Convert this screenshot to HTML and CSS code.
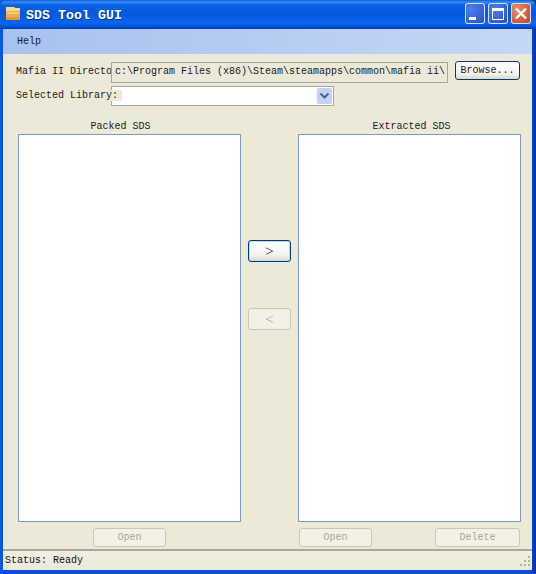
FILE: index.html
```html
<!DOCTYPE html>
<html lang="en">
<head>
<meta charset="utf-8">
<title>SDS Tool GUI</title>
<link rel="stylesheet" href="styles.css">
</head>
<body>
<div class="window">
  <header class="titlebar">
    <svg class="app-icon" width="16" height="16" viewBox="0 0 16 16" aria-hidden="true">
      <path d="M1 2h8l1 1h5v11a1 1 0 0 1-1 1H2a1 1 0 0 1-1-1z" fill="#f0b048"/>
      <path d="M1 2h8l1 1h5v3H1z" fill="#f8dc90"/>
      <path d="M2 7h12v2H2z" fill="#f6cf72"/>
      <path d="M1 12h14v2a1 1 0 0 1-1 1H2a1 1 0 0 1-1-1z" fill="#e09a3c"/>
    </svg>
    <span class="title-text">SDS Tool GUI</span>
    <div class="caption-buttons">
      <div class="cap cap-blue">
        <svg width="20" height="21" viewBox="0 0 20 21" aria-hidden="true"><rect x="4" y="14" width="7" height="3" fill="#fff"/></svg>
      </div>
      <div class="cap cap-blue">
        <svg width="20" height="21" viewBox="0 0 20 21" aria-hidden="true"><path d="M4.5 5.5h11v11h-11z" fill="none" stroke="#fff" stroke-width="1"/><rect x="4" y="5" width="12" height="3" fill="#fff"/></svg>
      </div>
      <div class="cap cap-red">
        <svg width="20" height="21" viewBox="0 0 20 21" aria-hidden="true"><path d="M5 5.5l10 10M15 5.5l-10 10" stroke="#fff" stroke-width="2.4" fill="none"/></svg>
      </div>
    </div>
  </header>
  <div class="body">
    <nav class="menubar"><span class="menu-item">Help</span></nav>
    <main class="content">
      <div class="row row-dir">
        <label class="field-label">Mafia II Directo</label>
        <div class="path-box">c:\Program Files (x86)\Steam\steamapps\common\mafia ii\</div>
        <button class="btn browse" type="button">Browse...</button>
      </div>
      <div class="row row-lib">
        <label class="field-label"><span class="over">Selected Library:</span></label>
        <div class="combo">
          <span class="combo-arrow">
            <svg width="11" height="8" viewBox="0 0 11 8" aria-hidden="true"><path d="M1.5 1.5l4 4 4-4" fill="none" stroke="#4d6185" stroke-width="2"/></svg>
          </span>
        </div>
      </div>
      <div class="panes">
        <div class="pane-head pane-head-left">Packed SDS</div>
        <div></div>
        <div class="pane-head pane-head-right">Extracted SDS</div>
        <div class="listbox"></div>
        <div class="transfer">
          <button class="btn move active" type="button">&gt;</button>
          <button class="btn move" type="button" disabled>&lt;</button>
        </div>
        <div class="listbox"></div>
        <div class="actions actions-left">
          <button class="btn action" type="button" disabled>Open</button>
        </div>
        <div></div>
        <div class="actions actions-right">
          <button class="btn action" type="button" disabled>Open</button>
          <button class="btn action delete" type="button" disabled>Delete</button>
        </div>
      </div>
    </main>
    <footer class="statusbar">
      <span>Status: Ready</span>
      <svg class="grip" width="12" height="12" viewBox="0 0 12 12" aria-hidden="true">
        <g fill="#b5b19f"><rect x="9" y="1" width="2" height="2"/><rect x="5" y="5" width="2" height="2"/><rect x="9" y="5" width="2" height="2"/><rect x="1" y="9" width="2" height="2"/><rect x="5" y="9" width="2" height="2"/><rect x="9" y="9" width="2" height="2"/></g>
      </svg>
    </footer>
  </div>
</div>
</body>
</html>
```
FILE: styles.css
```css
* { box-sizing: border-box; }
html, body { margin: 0; padding: 0; }
body {
  width: 536px;
  height: 574px;
  overflow: hidden;
  font-family: "Liberation Mono", "DejaVu Sans Mono", monospace;
  font-size: 10px;
  color: #1a1a1a;
  background: #0a3fc4;
}
.window {
  width: 536px;
  height: 574px;
  display: flex;
  flex-direction: column;
  background: linear-gradient(90deg, #0a5be8 0, #0a4fd8 4px, #0a4fd8 530px, #0a2fa8 536px);
}
.titlebar {
  height: 29px;
  flex: none;
  display: flex;
  align-items: center;
  padding: 0 5px 0 5px;
  border-radius: 7px 7px 0 0;
  background: linear-gradient(180deg, #0a5ae0 0, #3a8cf5 2px, #0a62e8 5px, #0358dc 14px, #0a66f0 23px, #0450d0 27px, #0238a8 29px);
}
.app-icon { flex: none; margin-right: 5px; margin-top: -3px; }
.title-text {
  flex: 1;
  margin-top: 1px;
  font-size: 13.33px;
  font-weight: bold;
  color: #fff;
  text-shadow: 1px 1px 0 #0a2f90;
}
.caption-buttons { display: flex; gap: 3px; margin-top: -2px; }
.cap {
  width: 20px;
  height: 21px;
  border: 0;
  border-radius: 3px;
  box-shadow: inset 0 0 0 1px #d4e0f7;
  display: flex;
}
.cap-blue { background: radial-gradient(circle at 30% 30%, #4c7fe8 0, #3a63d6 55%, #2a48b8 100%); }
.cap-red { background: radial-gradient(circle at 30% 30%, #e8906c 0, #d8603c 55%, #b8402a 100%); }
.body {
  flex: 1;
  min-height: 0;
  margin: 0 4px 4px 3px;
  display: flex;
  flex-direction: column;
  background: #ece9d8;
}
.menubar {
  height: 25px;
  flex: none;
  display: flex;
  align-items: center;
  padding-left: 14px;
  background: linear-gradient(90deg, #a8c2ee 0, #c4d7f6 100%);
}
.menu-item { line-height: 12px; margin-top: 1px; }
.content {
  flex: 1;
  min-height: 0;
  padding: 8px 0 0 15px;
}
.row { display: flex; align-items: flex-start; margin-left: -2px; }
.row-dir { height: 24px; }
.row-lib { height: 23px; }
.field-label {
  width: 95px;
  flex: none;
  white-space: nowrap;
  line-height: 12px;
  padding-top: 4px;
}
.over { position: relative; background: #ece9d8; padding-right: 4px; }
.path-box {
  width: 337px;
  height: 21px;
  flex: none;
  padding: 2px 0 0 3px;
  line-height: 13px;
  white-space: nowrap;
  border: 1px solid #a3a89f;
  background: #ece9d8;
}
.btn {
  font: inherit;
  color: #1a1a1a;
  padding: 0;
  border: 1px solid #003c74;
  border-radius: 3px;
  background: linear-gradient(180deg, #fff 0, #f4f4ee 70%, #dcd8c8 100%);
  text-align: center;
}
.btn:disabled {
  color: #a8a690;
  border-color: #c9c7ba;
  background: #f3f1e6;
}
.browse {
  width: 65px;
  height: 19px;
  margin-left: 7px;
  margin-top: -1px;
  padding-bottom: 1px;
  line-height: 13px;
}
.combo {
  width: 223px;
  height: 20px;
  display: flex;
  justify-content: flex-end;
  padding: 1px;
  border: 1px solid #a3a89f;
  background: #fff;
}
.combo-arrow {
  width: 15px;
  height: 16px;
  display: flex;
  align-items: center;
  justify-content: center;
  border-radius: 2px;
  background: #c1d2f4;
}
.panes {
  display: grid;
  grid-template-columns: 223px 57px 223px;
  grid-template-rows: 13px 388px 27px;
  margin-top: 12px;
}
.pane-head { text-align: center; line-height: 11px; }
.pane-head-left { padding-right: 18px; }
.pane-head-right { padding-left: 4px; }
.listbox {
  border: 1px solid #7f9db9;
  background: #fff;
}
.transfer {
  padding: 106px 0 0 7px;
  display: flex;
  flex-direction: column;
  gap: 46px;
}
.move {
  width: 43px;
  height: 22px;
  font-family: "Liberation Serif", serif;
  font-size: 15px;
  line-height: 18px;
}
.move.active {
  box-shadow: inset 0 0 0 1px #c6d7ef;
}
.actions { display: flex; padding-top: 6px; }
.action { height: 19px; line-height: 15px; }
.actions-left .action { width: 73px; margin-left: 75px; }
.actions-right .action { width: 73px; margin-left: 1px; }
.actions-right .delete { width: 85px; margin-left: 63px; }
.statusbar {
  height: 21px;
  flex: none;
  margin-top: auto;
  display: flex;
  align-items: center;
  justify-content: space-between;
  padding: 0 1px 0 2px;
  border-top: 2px solid #aca899;
  line-height: 12px;
  color: #111;
  background: linear-gradient(180deg, #f2efe2 0, #ece9d8 100%);
}
```
